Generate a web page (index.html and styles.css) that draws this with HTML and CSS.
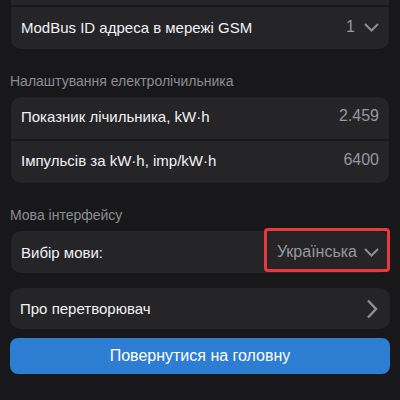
FILE: index.html
```html
<!DOCTYPE html>
<html lang="uk">
<head>
<meta charset="utf-8">
<link rel="stylesheet" href="styles.css">
</head>
<body>
<div class="page">
  <div class="group">
    <div class="row"></div>
    <div class="row lift"><span class="label">ModBus ID адреса в мережі GSM</span><span class="value">1<svg class="chev-down" width="15" height="9" viewBox="0 0 15 9"><path d="M1 1l6.5 6.5L14 1" fill="none" stroke="#8e8e93" stroke-width="2"/></svg></span></div>
  </div>

  <div class="section">Налаштування електролічильника</div>
  <div class="group">
    <div class="row lift2"><span class="label">Показник лічильника, kW·h</span><span class="value">2.459</span></div>
    <div class="row lift2"><span class="label">Імпульсів за kW·h, imp/kW·h</span><span class="value">6400</span></div>
  </div>

  <div class="section">Мова інтерфейсу</div>
  <div class="group">
    <div class="row"><span class="label">Вибір мови:</span><span class="value select">Українська<svg class="chev-down wide" width="15" height="9" viewBox="0 0 15 9"><path d="M1 1l6.5 6.5L14 1" fill="none" stroke="#8e8e93" stroke-width="2"/></svg></span></div>
  </div>

  <div class="group wide-card">
    <div class="row short"><span class="label">Про перетворювач</span><svg class="chev-right" width="12" height="20" viewBox="0 0 12 20"><path d="M2 1.5l8 8.5-8 8.5" fill="none" stroke="#8e8e93" stroke-width="2.5"/></svg></div>
  </div>

  <div class="button">Повернутися на головну</div>
</div>
</body>
</html>
```

FILE: styles.css
```css
html, body {
  margin: 0;
  padding: 0;
  background: #18181a;
}
body {
  font-family: "Liberation Sans", Arial, sans-serif;
  width: 400px;
  height: 400px;
  overflow: hidden;
}
.page {
  margin-top: -37px;
  padding: 0 11px;
  display: flex;
  flex-direction: column;
}
.group {
  display: flex;
  flex-direction: column;
  gap: 2px;
  border-radius: 10px;
}
.row {
  box-sizing: border-box;
  height: 42px;
  background: #252527;
  display: flex;
  align-items: center;
  justify-content: space-between;
  padding: 0 10px;
  font-size: 16px;
  color: #f2f2f5;
}
.row.lift {
  padding-bottom: 2px;
}
.row.lift2 {
  padding-bottom: 4px;
}
.label {
  font-size: 15px;
}
.group .row:first-child {
  border-top-left-radius: 10px;
  border-top-right-radius: 10px;
}
.group .row:last-child {
  border-bottom-left-radius: 10px;
  border-bottom-right-radius: 10px;
}
.row.short {
  height: 41px;
}
.value {
  color: #98989e;
  display: flex;
  align-items: center;
}
.chev-down {
  margin-left: 9px;
}
.chev-down.wide {
  margin-left: 7px;
}
.select {
  position: relative;
  height: 42px;
}
.select::after {
  content: "";
  position: absolute;
  top: -3px;
  bottom: 1px;
  left: -13px;
  right: -11px;
  border: 3px solid #e8393d;
  border-radius: 4px;
}
.chev-right {
  margin-right: 2px;
}
.section {
  margin: 24px 0 8px -1px;
  font-size: 14px;
  line-height: 16px;
  color: #8d8d92;
}
.wide-card {
  margin: 15px -1px 0;
}
.button {
  margin: 9px -1px 0;
  height: 36px;
  border-radius: 8px;
  background: #2d7dd2;
  color: #ffffff;
  font-size: 16px;
  display: flex;
  align-items: center;
  justify-content: center;
}
```
